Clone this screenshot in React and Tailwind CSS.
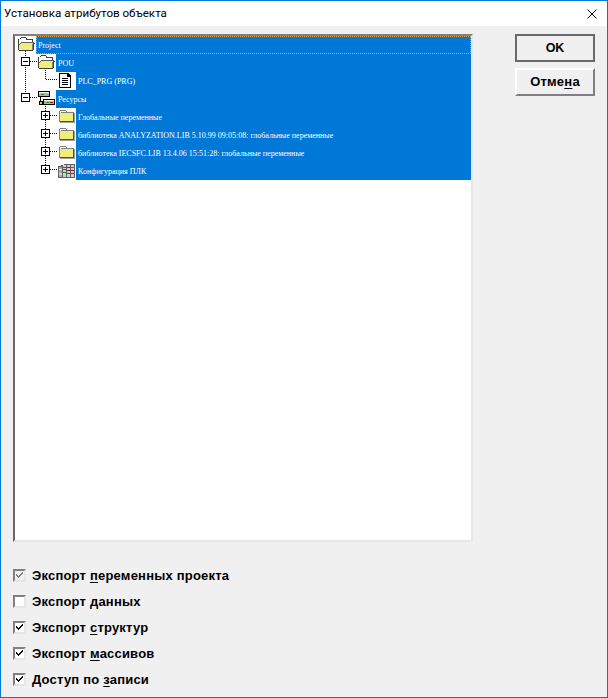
import React from "react";

const uiFont = "font-['Liberation_Sans',sans-serif]";
const folderFill = "#eeee78";

// Small bitmap-style tree icons
function FolderOpen() {
  return (
    <svg width="17" height="14" viewBox="0 0 17 14" shapeRendering="crispEdges">
      <path d="M2 1h1V0h5v1h1v1h6v3h1v1h1v1h-1v6h-1v1H1v-1H0V2h2z" fill="#404040" />
      <path d="M1 2h2V1h5v2h6v2H3v1H2v1H1z" fill="#fff" />
      <path d="M3 6h12v1h-1v6H1V8h1V7h1z" fill={folderFill} />
      <path d="M3 5h13v1H3zM2 6h1v1H2zM1 7h1v1H1z" fill="#606060" />
      <path d="M14 7h1v6h-1z" fill="#808080" />
    </svg>
  );
}

function FolderClosed() {
  return (
    <svg width="17" height="14" viewBox="0 0 17 14" shapeRendering="crispEdges">
      <path d="M1 2h1V1h6v1h1v1h7v10H1z" fill="#808080" />
      <path d="M2 4h13v8H2z" fill={folderFill} />
      <path d="M2 2h6v1H2zM2 3h1v1H2z" fill="#fff" />
      <path d="M15 4h1v9H2v-1h13z" fill="#505050" />
      <path d="M16 4h1v10H2v-1h14z" fill="#a0a0a0" />
    </svg>
  );
}

function DocIcon() {
  return (
    <svg width="15" height="15" viewBox="0 0 15 15" shapeRendering="crispEdges">
      <path d="M1 0h9l3 3v12H1z" fill="#000" />
      <path d="M2 1h7v3h3v10H2z" fill="#fff" />
      <path d="M4 5h6v1H4zM4 7h6v1H4zM4 9h6v1H4zM4 11h6v1H4z" fill="#000" />
    </svg>
  );
}

function ResourceIcon() {
  return (
    <svg width="18" height="15" viewBox="0 0 18 15" shapeRendering="crispEdges">
      <rect x="0" y="0" width="12" height="6" fill="#000" />
      <rect x="1" y="1" width="10" height="4" fill="#b0b0b0" />
      <rect x="1" y="1" width="10" height="1" fill="#fff" />
      <rect x="3" y="3" width="3" height="1" fill="#00c000" />
      <rect x="2" y="6" width="1" height="6" fill="#000" />
      <rect x="1" y="10" width="4" height="4" fill="#000" />
      <rect x="2" y="11" width="2" height="2" fill="#d8d800" />
      <rect x="5" y="11" width="2" height="1" fill="#000" />
      <rect x="5" y="8" width="12" height="6" fill="#000" />
      <rect x="6" y="9" width="10" height="4" fill="#b0b0b0" />
      <rect x="6" y="9" width="10" height="1" fill="#fff" />
      <rect x="8" y="11" width="3" height="1" fill="#00c000" />
      <rect x="12" y="11" width="3" height="1" fill="#e00000" />
    </svg>
  );
}

function PlcIcon() {
  return (
    <svg width="18" height="16" viewBox="0 0 18 16" shapeRendering="crispEdges">
      <path d="M0 3h3V2h3V1h11v14H0z" fill="#606060" />
      <rect x="1" y="4" width="3" height="10" fill="#a8a8a8" />
      <rect x="1" y="6" width="3" height="1" fill="#fff" />
      <rect x="1" y="10" width="3" height="2" fill="#d8d8d8" />
      <rect x="5" y="2" width="3" height="12" fill="#d0d0d0" />
      <rect x="9" y="2" width="3" height="12" fill="#d0d0d0" />
      <rect x="13" y="2" width="3" height="12" fill="#d0d0d0" />
      <path d="M5 4h3v1H5zM13 4h3v1h-3zM5 9h3v1H5z" fill="#00a000" />
      <path d="M9 4h3v1H9zM9 7h3v1H9zM13 7h3v1h-3z" fill="#d00000" />
      <path d="M5 6h3v1H5zM9 10h3v1H9zM13 10h3v1h-3z" fill="#008000" />
    </svg>
  );
}

// Expand/collapse box, x and y are in tree coordinates
function TreeBox({ x, y, open }) {
  return (
    <g>
      <rect x={x + 0.5} y={y + 0.5} width="8" height="8" fill="#fff" stroke="#000" />
      <rect x={x + 2} y={y + 4} width="5" height="1" fill="#000" />
      {!open && <rect x={x + 4} y={y + 2} width="1" height="5" fill="#000" />}
    </g>
  );
}

const rows = [
  { level: 0, label: "Project", icon: <FolderOpen />, focus: true },
  { level: 1, label: "POU", icon: <FolderOpen /> },
  { level: 2, label: "PLC_PRG (PRG)", icon: <DocIcon /> },
  { level: 1, label: "Ресурсы", icon: <ResourceIcon /> },
  { level: 2, label: "Глобальные переменные", icon: <FolderClosed /> },
  {
    level: 2,
    label: "библиотека ANALYZATION.LIB 5.10.99 09:05:08: глобальные переменные",
    icon: <FolderClosed />,
  },
  {
    level: 2,
    label: "библиотека IECSFC.LIB 13.4.06 15:51:28: глобальные переменные",
    icon: <FolderClosed />,
  },
  { level: 2, label: "Конфигурация ПЛК", icon: <PlcIcon /> },
];

const indents = { 0: "w-0", 1: "w-5", 2: "w-10" };

function TreeLines() {
  return (
    <svg
      className="absolute left-0 top-0 pointer-events-none"
      width="60"
      height="160"
      shapeRendering="crispEdges"
    >
      <g stroke="#000" strokeDasharray="1 1" fill="none">
        <path d="M10.5 15V58" />
        <path d="M15 25.5H23M15 61.5H23" />
        <path d="M30.5 32V44M30.5 70V130" />
        <path d="M31 43.5H43M35 79.5H43M35 97.5H43M35 115.5H43M35 133.5H43" />
      </g>
      <TreeBox x={6} y={21} open />
      <TreeBox x={6} y={57} open />
      <TreeBox x={26} y={75} />
      <TreeBox x={26} y={93} />
      <TreeBox x={26} y={111} />
      <TreeBox x={26} y={129} />
    </svg>
  );
}

function Tree() {
  return (
    <div className="relative h-[508px] w-[460px] bg-white border-2 border-t-[#808080] border-l-[#696969] border-r-[#e6e6e6] border-b-[#e6e6e6]">
      <TreeLines />
      <div className="flex flex-col">
        {rows.map((row) => (
          <div key={row.label} className="relative flex h-[18px] pl-px">
            <div className={indents[row.level]} />
            <div className="w-5 pl-[2px] pt-px">{row.icon}</div>
            <div
              className={`flex-1 bg-[#0078d7] pl-[2px] pt-px text-white text-[8px] leading-[18px] font-['Liberation_Serif',serif] whitespace-nowrap ${
                row.focus ? "outline-1 -outline-offset-1 outline-dotted outline-[#e8a040]" : ""
              }`}
            >
              {row.label}
            </div>
          </div>
        ))}
      </div>
    </div>
  );
}

function CheckOption({ checked, disabled, before, mnemonic, after }) {
  return (
    <div className="flex h-[13px] items-center">
      <div
        className={`flex h-[13px] w-[13px] items-center justify-center border-2 border-t-[#808080] border-l-[#808080] border-r-[#e6e6e6] border-b-[#e6e6e6] ${
          disabled ? "bg-[#f0f0f0]" : "bg-white"
        }`}
      >
        {checked && (
          <svg width="9" height="9" viewBox="0 0 9 9" shapeRendering="crispEdges">
            <path
              d="M1 3h1v1h1v1h1V4h1V3h1V2h1V1h1v2H7v1H6v1H5v1H4v1H3V6H2V5H1z"
              fill={disabled ? "#808080" : "#000"}
            />
          </svg>
        )}
      </div>
      <span className={`ml-[6px] text-[13px] font-bold tracking-[0.2px] text-black whitespace-nowrap ${uiFont}`}>
        {before}
        <u className="underline-offset-2">{mnemonic}</u>
        {after}
      </span>
    </div>
  );
}

export default function App() {
  return (
    <div className="flex h-[698px] w-[608px] flex-col border border-[#0078d7] bg-[#f0f0f0]">
      <div className="flex h-[25px] items-center justify-between bg-white pl-[3px] pr-[10px]">
        <span className="text-[11.6px] text-black font-['Roboto',sans-serif]">Установка атрибутов объекта</span>
        <svg width="10" height="10" viewBox="0 0 10 10">
          <path d="M0.5 0.5L9.5 9.5M9.5 0.5L0.5 9.5" stroke="#000" fill="none" />
        </svg>
      </div>
      <div className="flex flex-1 flex-col pl-3 pt-2">
        <div className="flex items-start gap-[42px]">
          <Tree />
          <div className="flex w-20 flex-col gap-[6px]">
            <button className={`h-7 bg-[#f0f0f0] border-2 border-[#696969] text-[12.5px] font-bold text-black ${uiFont}`}>
              OK
            </button>
            <button className={`h-7 bg-[#f0f0f0] border-2 border-t-white border-l-white border-r-[#808080] border-b-[#808080] text-[13px] font-bold tracking-[0.2px] text-black ${uiFont}`}>
              Отме<u className="underline-offset-2">н</u>а
            </button>
          </div>
        </div>
        <div className="mt-[27px] flex flex-col gap-[13px]">
          <CheckOption checked disabled before="Экспорт " mnemonic="п" after="еременных проекта" />
          <CheckOption before="Экспорт " mnemonic="д" after="анных" />
          <CheckOption checked before="Экспорт " mnemonic="с" after="труктур" />
          <CheckOption checked before="Экспорт " mnemonic="м" after="ассивов" />
          <CheckOption checked before="Доступ по " mnemonic="з" after="аписи" />
        </div>
      </div>
    </div>
  );
}
